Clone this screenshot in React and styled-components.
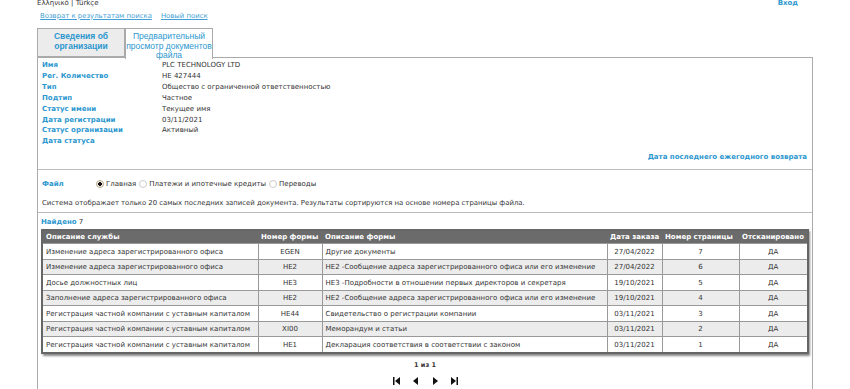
import React from "react";
import styled, { createGlobalStyle } from "styled-components";

const Global = createGlobalStyle`
  html, body { margin: 0; padding: 0; background: #fff; }
  body { font-family: "DejaVu Sans", Verdana, sans-serif; font-size: 7px; color: #333; }
`;

const Page = styled.div`
  width: 776px;
  margin-left: 37px;
  margin-top: -2px;
`;

const TopBar = styled.div`
  display: flex;
  justify-content: space-between;
  align-items: center;
  height: 10px;
  padding-right: 15px;
`;

const Lang = styled.span`
  color: #333;
`;

const Login = styled.a`
  color: #2c97cf;
  font-weight: bold;
  text-decoration: none;
`;

const LinksRow = styled.div`
  display: flex;
  gap: 9px;
  padding-left: 3px;
  height: 13px;
  align-items: center;
  margin-top: 1px;
  font-size: 6.9px;
`;

const TopLink = styled.a`
  color: #3ea0d4;
  text-decoration: underline;
`;

const Tabs = styled.div`
  display: flex;
  margin-top: 6px;
  height: 29px;
  align-items: flex-start;
`;

const Tab = styled.div`
  box-sizing: border-box;
  width: ${(p) => p.$w}px;
  height: ${(p) => (p.$active ? 31 : 29)}px;
  border: 1px solid #aaa;
  border-bottom: ${(p) => (p.$active ? "none" : "1px solid #aaa")};
  background: ${(p) => (p.$active ? "#fff" : "#ececec")};
  color: #2c97cf;
  font-family: "Liberation Sans", Arial, sans-serif;
  font-size: 8.5px;
  font-weight: ${(p) => (p.$active ? "normal" : "bold")};
  text-align: center;
  line-height: 9.5px;
  padding-top: 3px;
  position: relative;
  z-index: ${(p) => (p.$active ? 2 : 1)};
`;

const Panel = styled.div`
  border: 1px solid #aaa;
  height: 340px;
  box-sizing: border-box;
`;

const InfoGrid = styled.div`
  display: grid;
  grid-template-columns: 120px 1fr;
  padding: 2px 4px 0 4px;
  line-height: 10.9px;
`;

const Label = styled.div`
  color: #2c97cf;
  font-weight: bold;
`;

const Value = styled.div`
  color: #333;
`;

const AnnualRow = styled.div`
  text-align: right;
  padding: 5px 5px 0 0;
  height: 17px;
  line-height: 11px;
  color: #2c97cf;
  font-weight: bold;
  border-bottom: 1px solid #bbb;
`;

const FileRow = styled.div`
  display: flex;
  align-items: center;
  padding: 0 4px;
  height: 14px;
  margin-top: 7px;
`;

const FileLabel = styled.span`
  color: #2c97cf;
  font-weight: bold;
  width: 54px;
`;

const RadioOpt = styled.label`
  display: flex;
  align-items: center;
  gap: 2px;
  margin-right: 3px;
  color: #333;
`;

const RadioDot = styled.span`
  box-sizing: border-box;
  width: 8px;
  height: 8px;
  border-radius: 50%;
  border: 1px solid ${(p) => (p.$on ? "#b5a995" : "#ccc")};
  background: ${(p) => (p.$on ? "radial-gradient(circle, #111 0 1.6px, #f3ebde 2px)" : "#fff")};
`;

const Note = styled.div`
  padding: 0 4px;
  height: 18px;
  line-height: 18px;
  margin-top: 3px;
  border-bottom: 1px solid #bbb;
  font-size: 6.9px;
`;

const Found = styled.div`
  padding: 4px 3px 0;
  height: 10px;
  line-height: 10px;
  color: #333;
  & b { color: #2c97cf; }
`;

const TableWrap = styled.div`
  margin: 2px 4px 0 3px;
  box-shadow: 2px 2px 2px #888;
`;

const Table = styled.table`
  width: 100%;
  table-layout: fixed;
  border-collapse: collapse;
  border: 2px solid #666;
`;

const Th = styled.th`
  background: #6b6b6b;
  color: #fff;
  font-weight: bold;
  text-align: left;
  padding: 0 3px;
  height: 12px;
  white-space: nowrap;
  overflow: hidden;
`;

const Tr = styled.tr`
  background: ${(p) => (p.$alt ? "#ececec" : "#fff")};
`;

const Td = styled.td`
  border: 1px solid #999;
  height: 14.5px;
  padding: 0 3px;
  text-align: ${(p) => p.$align || "left"};
  white-space: nowrap;
  overflow: hidden;
  color: #333;
`;

const Pager = styled.div`
  display: flex;
  flex-direction: column;
  align-items: center;
  margin-top: 7px;
`;

const PageInfo = styled.div`
  font-weight: bold;
  font-size: 6.5px;
  color: #333;
`;

const PagerBtns = styled.div`
  display: flex;
  gap: 11px;
  margin-top: 8px;
`;

const Icon = ({ kind }) => {
  const paths = {
    first: <><rect x="0" y="0" width="1.5" height="8" /><polygon points="7,0 7,8 2,4" /></>,
    prev: <polygon points="6,0 6,8 1,4" />,
    next: <polygon points="2,0 2,8 7,4" />,
    last: <><polygon points="1,0 1,8 6,4" /><rect x="6.5" y="0" width="1.5" height="8" /></>,
  };
  return (
    <svg width="8" height="8" viewBox="0 0 8 8" fill="#111">
      {paths[kind]}
    </svg>
  );
};

const info = [
  ["Имя", "PLC TECHNOLOGY LTD"],
  ["Рег. Количество", "HE 427444"],
  ["Тип", "Общество с ограниченной ответственностью"],
  ["Подтип", "Частное"],
  ["Статус имени", "Текущее имя"],
  ["Дата регистрации", "03/11/2021"],
  ["Статус организации", "Активный"],
  ["Дата статуса", ""],
];

const cols = [216, 64, 285, 55, 77, 69];
const heads = ["Описание службы", "Номер формы", "Описание формы", "Дата заказа", "Номер страницы", "Отсканировано"];

const rows = [
  ["Изменение адреса зарегистрированного офиса", "EGEN", "Другие документы", "27/04/2022", "7"],
  ["Изменение адреса зарегистрированного офиса", "HE2", "HE2 -Сообщение адреса зарегистрированного офиса или его изменение", "27/04/2022", "6"],
  ["Досье должностных лиц", "HE3", "HE3 -Подробности в отношении первых директоров и секретаря", "19/10/2021", "5"],
  ["Заполнение адреса зарегистрированного офиса", "HE2", "HE2 -Сообщение адреса зарегистрированного офиса или его изменение", "19/10/2021", "4"],
  ["Регистрация частной компании с уставным капиталом", "HE44", "Свидетельство о регистрации компании", "03/11/2021", "3"],
  ["Регистрация частной компании с уставным капиталом", "XI00", "Меморандум и статьи", "03/11/2021", "2"],
  ["Регистрация частной компании с уставным капиталом", "HE1", "Декларация соответствия в соответствии с законом", "03/11/2021", "1"],
];

export default function App() {
  return (
    <>
      <Global />
      <Page>
        <TopBar>
          <Lang>Ελληνικό | Türkçe</Lang>
          <Login href="#">Вход</Login>
        </TopBar>
        <LinksRow>
          <TopLink href="#">Возврат к результатам поиска</TopLink>
          <TopLink href="#">Новый поиск</TopLink>
        </LinksRow>
        <Tabs>
          <Tab $w={88}>Сведения об<br />организации</Tab>
          <Tab $w={88} $active>Предварительный<br />просмотр документов<br />файла</Tab>
        </Tabs>
        <Panel>
          <InfoGrid>
            {info.map(([l, v]) => (
              <React.Fragment key={l}>
                <Label>{l}</Label>
                <Value>{v}</Value>
              </React.Fragment>
            ))}
          </InfoGrid>
          <AnnualRow>Дата последнего ежегодного возврата</AnnualRow>
          <FileRow>
            <FileLabel>Файл</FileLabel>
            <RadioOpt><RadioDot $on /> Главная</RadioOpt>
            <RadioOpt><RadioDot /> Платежи и ипотечные кредиты</RadioOpt>
            <RadioOpt><RadioDot /> Переводы</RadioOpt>
          </FileRow>
          <Note>Система отображает только 20 самых последних записей документа. Результаты сортируются на основе номера страницы файла.</Note>
          <Found><b>Найдено</b> 7</Found>
          <TableWrap>
            <Table>
              <colgroup>
                {cols.map((w, i) => <col key={i} style={{ width: w }} />)}
              </colgroup>
              <thead>
                <tr>
                  {heads.map((h) => <Th key={h}>{h}</Th>)}
                </tr>
              </thead>
              <tbody>
                {rows.map((r, i) => (
                  <Tr key={i} $alt={i % 2 === 1}>
                    <Td>{r[0]}</Td>
                    <Td $align="center">{r[1]}</Td>
                    <Td>{r[2]}</Td>
                    <Td $align="center">{r[3]}</Td>
                    <Td $align="center">{r[4]}</Td>
                    <Td $align="center">ДА</Td>
                  </Tr>
                ))}
              </tbody>
            </Table>
          </TableWrap>
          <Pager>
            <PageInfo>1 из 1</PageInfo>
            <PagerBtns>
              <Icon kind="first" />
              <Icon kind="prev" />
              <Icon kind="next" />
              <Icon kind="last" />
            </PagerBtns>
          </Pager>
        </Panel>
      </Page>
    </>
  );
}
